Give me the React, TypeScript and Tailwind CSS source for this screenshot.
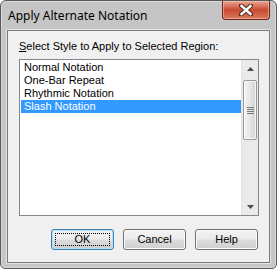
import React from 'react';

const items = ['Normal Notation', 'One-Bar Repeat', 'Rhythmic Notation', 'Slash Notation'];

function CloseButton() {
  return (
    <div className="absolute right-[6px] top-0 h-[19px] w-[48px] rounded-b-[4px] border border-t-0 border-[#6e2418] bg-gradient-to-b from-[#e7a593] via-[#c94a31] to-[#d8785c] flex items-center justify-center shadow-[inset_0_0_0_1px_rgba(255,220,200,0.45)]">
      <svg width="14" height="12" viewBox="0 0 14 12">
        <path d="M2 1.5 L12 10.5 M12 1.5 L2 10.5" stroke="#5a2a22" strokeWidth="4.4" strokeLinecap="square" />
        <path d="M2.5 2 L11.5 10 M11.5 2 L2.5 10" stroke="#ffffff" strokeWidth="2.4" strokeLinecap="square" />
      </svg>
    </div>
  );
}

function ScrollArrow({ down }: { down?: boolean }) {
  return (
    <div className="h-[17px] flex items-center justify-center">
      <svg width="7" height="4" viewBox="0 0 7 4">
        {down ? <path d="M0 0 H7 L3.5 4 Z" fill="#4d4d4d" /> : <path d="M0 4 H7 L3.5 0 Z" fill="#4d4d4d" />}
      </svg>
    </div>
  );
}

function Scrollbar() {
  return (
    <div className="w-[17px] h-full flex flex-col bg-[#eaeaea] border-l border-[#e3e3e3]">
      <ScrollArrow />
      <div className="flex-1 flex flex-col">
        <div className="mt-[3px] mx-[1px] h-[60px] rounded-[2px] border border-[#979797] bg-gradient-to-r from-[#f2f2f2] via-[#e6e6e6] to-[#d3d3d3] flex flex-col items-center justify-center gap-[1px] shadow-[inset_0_0_0_1px_rgba(255,255,255,0.8)]">
          <div className="w-[7px] h-[1px] bg-[#7a7a7a]" />
          <div className="w-[7px] h-[1px] bg-[#7a7a7a]" />
          <div className="w-[7px] h-[1px] bg-[#7a7a7a]" />
          <div className="w-[7px] h-[1px] bg-[#7a7a7a]" />
        </div>
      </div>
      <ScrollArrow down />
    </div>
  );
}

function Button({ label, isDefault }: { label: string; isDefault?: boolean }) {
  return (
    <button
      className={`relative w-[63px] h-[21px] rounded-[3px] border ${isDefault ? 'border-[#3c7fb1] shadow-[inset_0_0_0_1px_#b6e2f9]' : 'border-[#707070] shadow-[inset_0_0_0_1px_#fbfbfb]'} bg-[linear-gradient(to_bottom,#f2f2f2_0%,#ebebeb_48%,#dddddd_52%,#cfcfcf_100%)] text-[11px] text-black leading-none flex items-center justify-center`}
    >
      {isDefault && <span className="absolute inset-[3px] border border-dotted border-black" />}
      {label}
    </button>
  );
}

export default function App() {
  return (
    <div className="w-[277px] h-[269px] bg-[#c5c5c5] rounded-t-[6px] rounded-b-[5px] border border-[#595959] relative flex flex-col font-['Liberation_Sans',Arial,sans-serif] overflow-hidden shadow-[inset_0_0_0_1px_#d9d9d9]">
      <CloseButton />
      <div className="h-[28px] pl-[7px] pt-[7px] text-[12px] text-black font-['Noto_Sans',sans-serif] leading-[15px]">
        Apply Alternate Notation
      </div>
      <div className="mx-[5px] border border-[#e4e4e4] rounded-[1px]">
        <div className="h-[233px] border border-[#7a7a7a] bg-[#f0f0f0] flex flex-col pl-[11px] pr-[10px] pt-[9px]">
          <div className="h-[13px] text-[11px] leading-[13px] text-black">
            <span className="underline">S</span>elect Style to Apply to Selected Region:
          </div>
          <div className="mt-[6px] h-[157px] border border-[#828790] bg-white flex">
            <div className="flex-1 pt-[1px] pl-[1px]">
              {items.map((item) => (
                <div
                  key={item}
                  className={`h-[13px] pl-[3px] text-[11px] leading-[13px] ${item === 'Slash Notation' ? 'bg-[#3399ff] text-white' : 'text-black'}`}
                >
                  {item}
                </div>
              ))}
            </div>
            <Scrollbar />
          </div>
          <div className="mt-[13px] flex justify-end gap-[9px] pr-[1px]">
            <Button label="OK" isDefault />
            <Button label="Cancel" />
            <Button label="Help" />
          </div>
        </div>
      </div>
    </div>
  );
}
